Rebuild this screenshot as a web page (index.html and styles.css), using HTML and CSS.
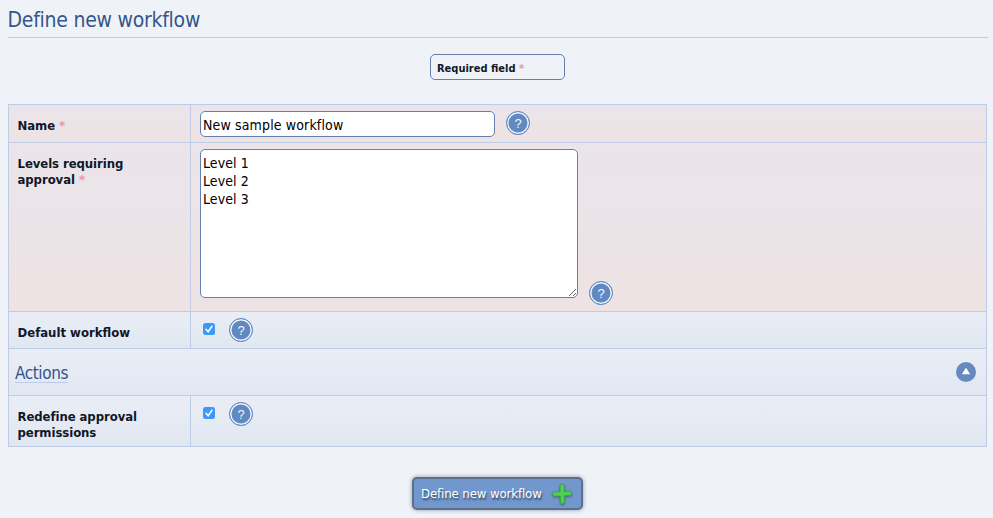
FILE: index.html
```
<!DOCTYPE html>
<html lang="en">
<head>
<meta charset="utf-8">
<title>Define new workflow</title>
<link rel="stylesheet" href="styles.css">
</head>
<body>
<h1>Define new workflow</h1>
<div class="legend">Required field <span class="star">*</span></div>
<form class="form">
  <div class="row required name-row">
    <label class="label">Name <span class="star">*</span></label>
    <div class="field"><input class="text-input" type="text" value="New sample workflow"><span class="help">?</span></div>
  </div>
  <div class="row required levels-row">
    <label class="label">Levels requiring<br>approval <span class="star">*</span></label>
    <div class="field"><textarea class="text-area">Level 1
Level 2
Level 3</textarea><span class="help">?</span></div>
  </div>
  <div class="row default-row">
    <label class="label">Default workflow</label>
    <div class="field"><span class="check"><svg viewBox="0 0 12 12"><path d="M3 6.3 5.2 8.7 9 3.2"/></svg></span><span class="help">?</span></div>
  </div>
  <div class="section">
    <h2>Actions</h2>
    <svg class="toggle" viewBox="0 0 20 20"><circle cx="10" cy="10" r="10"/><path d="M10 5.8 14.2 12.3H5.8Z"/></svg>
  </div>
  <div class="row redefine-row">
    <label class="label">Redefine approval permissions</label>
    <div class="field"><span class="check"><svg viewBox="0 0 12 12"><path d="M3 6.3 5.2 8.7 9 3.2"/></svg></span><span class="help">?</span></div>
  </div>
</form>
<button class="submit" type="button"><span>Define new workflow</span><svg class="plus" viewBox="0 0 22 24"><path d="M9.2 3.2Q11 1.6 13 2.6L13.2 9.4 19.6 9.2Q21.4 11.2 20 13.2L13.4 13.7 13.4 20.8Q11.6 22.6 9.6 21.4L9.2 14 2.6 14.2Q.8 12.4 2.2 10.2L9 9.7Z"/></svg></button>
</body>
</html>
```
FILE: styles.css
```
* { box-sizing: border-box; }
body {
  margin: 0;
  height: 518px;
  overflow: hidden;
  padding: 0 5px 0 8px;
  background: #eff3f8;
  color: #101828;
  font: 13px "DejaVu Sans Condensed", "DejaVu Sans", sans-serif;
  font-stretch: condensed;
}
h1, h2 { margin: 0; font-weight: 400; color: #36558a; white-space: nowrap; }
h1 {
  height: 38px;
  padding-top: 8px;
  border-bottom: 1px solid #bccbe6;
  font-size: 21px;
  line-height: 25px;
  letter-spacing: -.25px;
  text-indent: -.5px;
}
.star { color: #e6959c; }
.legend {
  width: 135px;
  height: 26px;
  margin: 16px 0 24px 422px;
  padding: 0 6px;
  border: 1px solid #6580ad;
  border-radius: 5px;
  font-size: 11px;
  font-weight: 700;
  line-height: 27px;
  white-space: nowrap;
}
.form {
  width: 979px;
  border: 1px solid #bdcce7;
  border-top: 0;
}
.row {
  display: grid;
  grid-template-columns: 182px 1fr;
  border-top: 1px solid #bdcce7;
  background: linear-gradient(#e9eef6, #e1e7f1);
}
.required { background: linear-gradient(#eae5eb, #eee2e3); }
.name-row { height: 38px; }
.levels-row { height: 169px; }
.default-row { height: 37px; }
.redefine-row { height: 51px; }
.label {
  padding: 12.5px 40px 0 8.5px;
  border-right: 1px solid #bdcce7;
  font-weight: 700;
  line-height: 16px;
  letter-spacing: -.07px;
}
.default-row .label { padding-right: 0; letter-spacing: 0; }
.field { display: flex; align-items: flex-start; padding: 6px 0 0 9px; }
.text-input, .text-area {
  margin: 0;
  border: 1px solid #6580ad;
  border-radius: 5px;
  background: #fff;
  color: #000;
  font: inherit;
  font-size: 14px;
  outline: 0;
}
.text-input { width: 295px; height: 26px; padding: 3px 2px 1px; letter-spacing: .14px; }
.text-area { width: 378px; height: 149px; padding: 4px 2px; line-height: 18px; letter-spacing: .1px; resize: both; }
.help {
  display: flex;
  flex: none;
  align-items: center;
  justify-content: center;
  width: 24px;
  height: 24px;
  margin-left: 11px;
  border: 1px solid #6189c1;
  border-radius: 50%;
  background: #6189c1;
  box-shadow: inset 0 0 0 1.5px #f1f5fc;
  color: #f1f5fc;
  font: 13px "Liberation Sans", sans-serif;
}
.levels-row .help { margin-top: 132px; }
.check {
  width: 12px;
  height: 12px;
  margin: 5px 3px 0 3px;
  border-radius: 2.5px;
  background: #3b99fc;
}
.check svg { display: block; fill: none; stroke: #fff; stroke-width: 1.5; stroke-linecap: round; }
.section {
  display: flex;
  align-items: flex-start;
  justify-content: space-between;
  height: 47px;
  padding: 12px 10px 0 6px;
  border-top: 1px solid #bdcce7;
  background: linear-gradient(#e9eef6, #e1e7f1);
}
h2 { height: 22px; border-bottom: 1px solid #bccbe6; font-size: 17px; line-height: 25px; letter-spacing: -.4px; }
.toggle { width: 20px; height: 20px; margin-top: 1px; fill: #6689c0; }
.toggle path { fill: #fff; }
.submit {
  display: flex;
  align-items: center;
  justify-content: space-between;
  width: 171px;
  height: 33px;
  margin: 30px 0 0 404px;
  padding: 0 8px 0 7px;
  border: 2px solid #5e6f8b;
  border-radius: 5px;
  background: #7297cd;
  box-shadow: 0 0 4px #8795aa;
  color: #fff;
  font: inherit;
  letter-spacing: -.08px;
  text-shadow: 1px 2px 2px #30445f;
  white-space: nowrap;
}
.plus { width: 22px; height: 24px; fill: #4fd052; stroke: #31a845; stroke-width: .8; stroke-linejoin: round; filter: drop-shadow(0 1px 1px #46617f); }
```
